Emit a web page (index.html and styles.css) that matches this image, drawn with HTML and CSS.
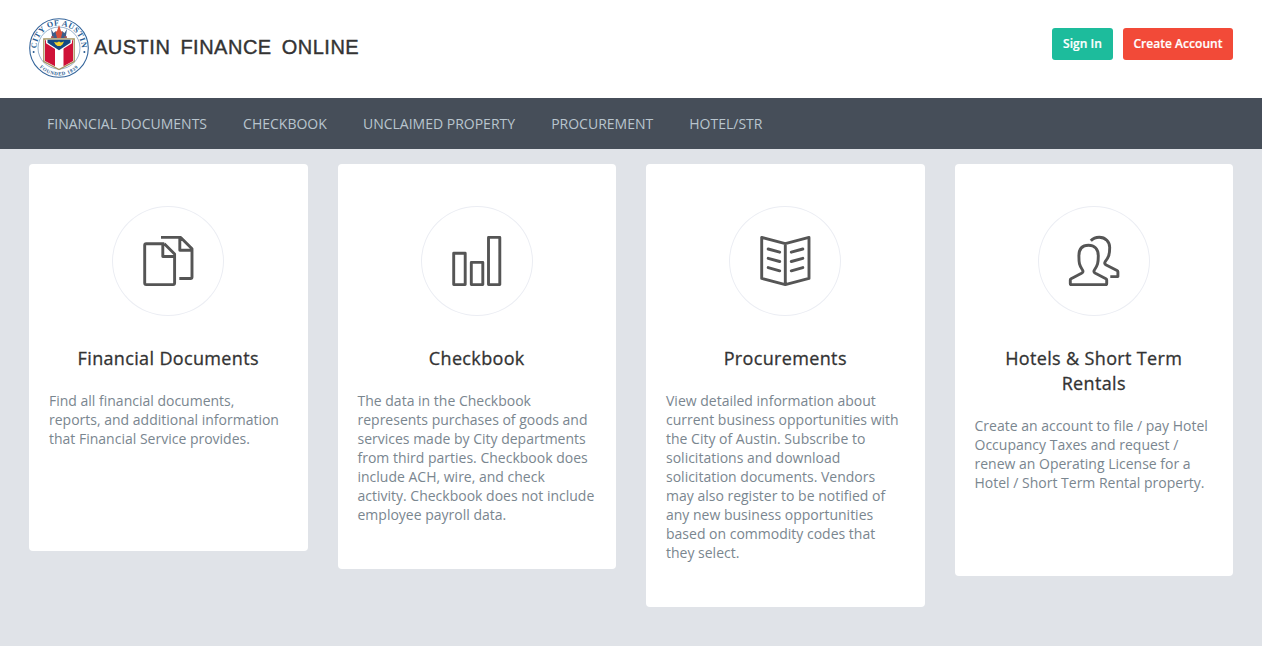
FILE: index.html
```html
<!DOCTYPE html>
<html lang="en">
<head>
<meta charset="utf-8">
<title>Austin Finance Online</title>
<link rel="stylesheet" href="styles.css">
</head>
<body>
<header class="header">
  <a class="brand">
    <svg class="seal" viewBox="0 0 60 60">
      <defs>
        <path id="arc-top" d="M8.970 38A22.500 22.500 0 1 1 51.030 38"/>
        <path id="arc-bottom" d="M3.800 38A27.400 27.400 0 0 0 56.200 38"/>
      </defs>
      <circle cx="30" cy="30" r="29.300" fill="#fff" stroke="#35659b" stroke-width="1.100"/>
      <circle cx="30" cy="30" r="21" fill="#fff" stroke="#6d91b8" stroke-width=".7"/>
      <text class="seal-name"><textPath href="#arc-top" startOffset="50%" text-anchor="middle">CITY OF AUSTIN</textPath></text>
      <text class="seal-year"><textPath href="#arc-bottom" startOffset="50%" text-anchor="middle">FOUNDED 1839</textPath></text>
      <circle cx="4.600" cy="34" r="1" fill="#285b92"/>
      <circle cx="55.400" cy="34" r="1" fill="#285b92"/>
      <path d="M14.800 21h30.400v22.500L30 51.500 14.800 43.500z" fill="#fff" stroke="#a4925d" stroke-width="1.300"/>
      <path d="M16 22.200h10V48.300L16 43zM34.500 22.200H44V43l-9.500 5.200z" fill="#cf1238"/>
      <path d="M17 21.800h26v3.500L30 33.500 17 25.300z" fill="#fff"/>
      <path d="M18.500 21.800h23v3L30 32.300l-11.500-7.500z" fill="#154a83"/>
      <path d="M25 24l3 .5 2-1 2 1 3-1-1.500 3-2 1.500h-3l-2-1.500z" fill="#f3d22e"/>
      <path d="M22 11l2.500 4 2.500-2 1 4h4l1-4 2.500 2 2.500-4-1 6.500 1 2.500H22l1-2.500z" fill="#3c5d8a"/>
      <path d="M28 20l-1.500-6 1.500-1 2-6 2 6 1.500 1-1.500 6zM22.500 18l3 1-3 1zM37.500 18l-3 1 3 1z" fill="#d8503b"/>
    </svg>
    <span class="brand-name">AUSTIN FINANCE ONLINE</span>
  </a>
  <div class="actions">
    <a class="btn btn-signin">Sign In</a>
    <a class="btn btn-create">Create Account</a>
  </div>
</header>
<nav class="nav">
  <a>FINANCIAL DOCUMENTS</a>
  <a>CHECKBOOK</a>
  <a>UNCLAIMED PROPERTY</a>
  <a>PROCUREMENT</a>
  <a>HOTEL/STR</a>
</nav>
<main class="cards">
  <section class="card card-documents">
    <div class="circle"><svg class="icon" viewBox="0 0 56 56">
      <path d="M24.300 10.800H6.200q-1.500 0-1.500 1.500v37.800q0 1.500 1.500 1.500h26.900q1.500 0 1.500-1.500V21L24.300 10.800M22.800 11v12.500h11.800M21 4.400h19.700L52 15.800V44q0 1.500-1.500 1.500H39.300M39.800 4.600v12.700H52"/>
    </svg></div>
    <h2>Financial Documents</h2>
    <p>Find all financial documents, reports, and additional information that Financial Service provides.</p>
  </section>
  <section class="card card-checkbook">
    <div class="circle"><svg class="icon" viewBox="0 0 56 56">
      <path d="M4.700 20.200h11.500v31.400H4.700zM22.300 29.400h11.500v22.200H22.300zM39.500 4.400h11.300v47.200H39.500z"/>
    </svg></div>
    <h2>Checkbook</h2>
    <p>The data in the Checkbook represents purchases of goods and services made by City departments from third parties. Checkbook does include ACH, wire, and check activity. Checkbook does not include employee payroll data.</p>
  </section>
  <section class="card card-procurements">
    <div class="circle"><svg class="icon" viewBox="0 0 56 56">
      <path d="M28.300 10.700L4.700 4.400v41l23.600 6.200L52 45.400v-41zV51.600"/>
      <path class="round" d="M11.200 16l11.500 3.200M11.200 25.300l11.500 3.200M11.200 34.600l11.500 3.200M34.300 19.200L45.800 16M34.300 28.500l11.500-3.200M34.300 37.800l11.500-3.200"/>
    </svg></div>
    <h2>Procurements</h2>
    <p>View detailed information about current business opportunities with the City of Austin. Subscribe to solicitations and download solicitation documents. Vendors may also register to be notified of any new business opportunities based on commodity codes that they select.</p>
  </section>
  <section class="card card-hotels">
    <div class="circle"><svg class="icon" viewBox="0 0 56 56">
      <path d="M5.500 51.600q-1.200 0-1.200-1.200V47q0-.8.800-1.300L15.500 40.300q2.300-1.300 1-3.300C13.300 32.500 12.900 30 12.900 23C12.900 15.500 17 12.300 22.500 12.300S32.300 15.500 32.300 23C32.300 30 31.600 32.500 28.400 37q-1.300 2 1 3.300L39.900 45.700q.8.500.8 1.300v3.400q0 1.200-1.200 1.200z"/>
      <path d="M24.800 7.800C27 5.500 30 4.300 33.200 4.300C39.500 4.300 43.700 8.800 43.700 14.500C43.700 22 42.500 24.500 39.200 28.700q-1.300 2 1 3.300L51 37.500q.9.500.9 1.300v4.800H44.300"/>
    </svg></div>
    <h2>Hotels &amp; Short Term Rentals</h2>
    <p>Create an account to file / pay Hotel Occupancy Taxes and request / renew an Operating License for a Hotel / Short Term Rental property.</p>
  </section>
</main>
</body>
</html>
```
FILE: styles.css
```css
* { box-sizing: border-box; }
body {
  margin: 0;
  min-height: 646px;
  background: #e0e3e8;
  font-family: "Open Sans", sans-serif;
  font-size: 14px;
  color: #7a868f;
}
.header {
  height: 98px;
  padding: 18px 29px 0;
  display: flex;
  justify-content: space-between;
  align-items: flex-start;
  background: #fff;
}
.brand { display: flex; align-items: flex-start; gap: 5px; }
.seal { width: 60px; height: 60px; display: block; }
.seal-name { font: bold 8px "Liberation Serif", serif; fill: #285b92; letter-spacing: .5px; }
.seal-year { font: bold 5px "Liberation Serif", serif; fill: #285b92; letter-spacing: .6px; }
.brand-name {
  padding-top: 17px;
  font: 20px/24px "Liberation Sans", Arial, sans-serif;
  color: #333;
  letter-spacing: .5px;
  word-spacing: 4px;
  -webkit-text-stroke: .4px #333;
  white-space: nowrap;
}
.actions { display: flex; gap: 10px; padding-top: 10px; }
.btn {
  height: 32px;
  border-radius: 3px;
  color: #fff;
  font-size: 12px;
  font-weight: 600;
  -webkit-text-stroke: .2px #fff;
  letter-spacing: .04px;
  line-height: 32px;
  text-align: center;
  white-space: nowrap;
}
.btn-signin { width: 61px; background: #1dbc9c; }
.btn-create { width: 110px; background: #f24a38; }
.nav {
  height: 51px;
  padding-left: 29px;
  display: flex;
  background: #464e59;
}
.nav a { padding: 0 18.050px; color: #b9c5ce; line-height: 52px; }
.cards {
  display: grid;
  grid-template-columns: repeat(4, 1fr);
  gap: 30px;
  align-items: start;
  padding: 15px 29px 0;
}
.card {
  padding: 42px 20px 0;
  border-radius: 4px;
  background: #fff;
}
.card-documents { height: 387px; }
.card-checkbook { height: 405px; }
.card-procurements { height: 443px; }
.card-hotels { height: 412px; }
.circle {
  width: 112px;
  height: 110px;
  margin: 0 auto;
  display: flex;
  justify-content: center;
  border: 1px solid #ebedf3;
  border-radius: 50%;
}
.icon {
  width: 56px;
  height: 56px;
  margin-top: 26px;
  fill: none;
  stroke: #555;
  stroke-width: 2.900px;
  stroke-linejoin: round;
}
.round { stroke-linecap: round; }
.card h2 {
  margin: 30px 0 20px;
  color: #333;
  font-size: 18px;
  font-weight: 400;
  -webkit-text-stroke: .3px #333;
  letter-spacing: .35px;
  line-height: 25px;
  text-align: center;
}
.card p { margin: 0; line-height: 19px; }
```
